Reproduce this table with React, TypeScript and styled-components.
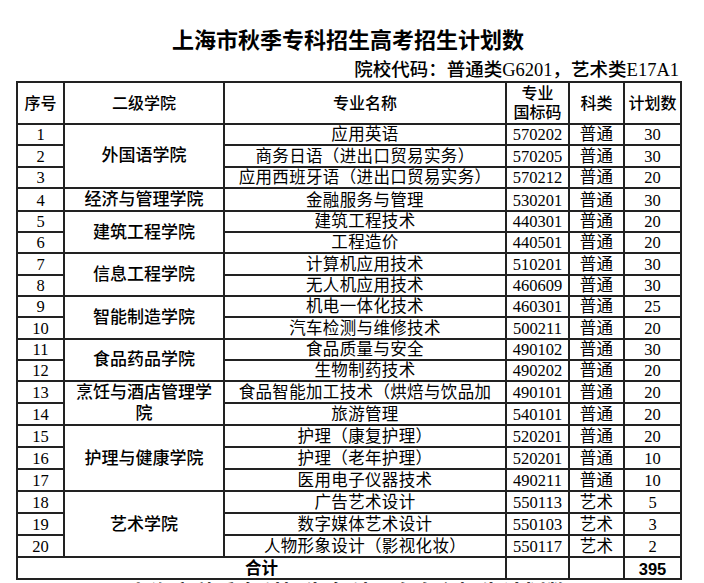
import React from "react";
import styled, { createGlobalStyle } from "styled-components";

const GlobalStyle = createGlobalStyle`
  html, body {
    margin: 0;
    padding: 0;
    background: #ffffff;
  }
  body {
    font-family: "Liberation Serif", "Noto Sans CJK SC", serif;
    color: #000;
    overflow: hidden;
  }
`;

const CJK = `"Liberation Serif", "Noto Sans CJK SC", serif`;

const Sheet = styled.div`
  width: 664px;
  padding-left: 16px;
`;

const Title = styled.div`
  padding-top: 28px;
  height: 26px;
  line-height: 26px;
  font-size: 22px;
  font-weight: 700;
  text-align: center;
  font-family: ${CJK};
`;

const SubTitle = styled.div`
  margin-top: 5px;
  height: 22px;
  line-height: 22px;
  font-size: 18.5px;
  font-weight: 500;
  text-align: right;
  padding-right: 1px;
  font-family: ${CJK};
`;

const Table = styled.table`
  width: 664px;
  border-collapse: collapse;
  table-layout: fixed;
  font-family: ${CJK};
`;

const Row = styled.tr<{ $h: number }>`
  height: ${(p) => p.$h}px;
`;

const Cell = styled.td<{ $spaced?: boolean }>`
  border: 2px solid #222;
  padding: 0;
  font-size: 16.5px;
  line-height: 18px;
  text-align: center;
  vertical-align: bottom;
  letter-spacing: ${(p) => (p.$spaced ? "0.35px" : "0")};
  white-space: nowrap;
  overflow: hidden;
`;

const HeadCell = styled.th`
  border: 2px solid #222;
  padding: 0;
  font-size: 16px;
  line-height: 19px;
  font-weight: 500;
  text-align: center;
  vertical-align: middle;
`;

const CollegeCell = styled.td`
  border: 2px solid #222;
  padding: 0 4px;
  font-size: 17px;
  line-height: 21px;
  font-weight: 500;
  text-align: center;
  vertical-align: middle;
`;

const TotalCell = styled.td<{ $sans?: boolean }>`
  border: 2px solid #222;
  padding: 0;
  font-size: 16.5px;
  line-height: 18px;
  font-weight: 700;
  text-align: center;
  vertical-align: bottom;
  font-family: ${(p) => (p.$sans ? `"Liberation Sans", "Noto Sans CJK SC", sans-serif` : CJK)};
`;

const NextTitle = styled.div`
  margin-top: 1px;
  height: 26px;
  line-height: 26px;
  font-size: 22px;
  font-weight: 700;
  text-align: center;
  font-family: ${CJK};
`;

type Major = { name: string; code: string; kind: string; plan: number };

const colleges: { name: string; majors: Major[] }[] = [
  {
    name: "外国语学院",
    majors: [
      { name: "应用英语", code: "570202", kind: "普通", plan: 30 },
      { name: "商务日语（进出口贸易实务）", code: "570205", kind: "普通", plan: 30 },
      { name: "应用西班牙语（进出口贸易实务）", code: "570212", kind: "普通", plan: 20 },
    ],
  },
  { name: "经济与管理学院", majors: [{ name: "金融服务与管理", code: "530201", kind: "普通", plan: 30 }] },
  {
    name: "建筑工程学院",
    majors: [
      { name: "建筑工程技术", code: "440301", kind: "普通", plan: 20 },
      { name: "工程造价", code: "440501", kind: "普通", plan: 20 },
    ],
  },
  {
    name: "信息工程学院",
    majors: [
      { name: "计算机应用技术", code: "510201", kind: "普通", plan: 30 },
      { name: "无人机应用技术", code: "460609", kind: "普通", plan: 30 },
    ],
  },
  {
    name: "智能制造学院",
    majors: [
      { name: "机电一体化技术", code: "460301", kind: "普通", plan: 25 },
      { name: "汽车检测与维修技术", code: "500211", kind: "普通", plan: 20 },
    ],
  },
  {
    name: "食品药品学院",
    majors: [
      { name: "食品质量与安全", code: "490102", kind: "普通", plan: 30 },
      { name: "生物制药技术", code: "490202", kind: "普通", plan: 20 },
    ],
  },
  {
    name: "烹饪与酒店管理学院",
    majors: [
      { name: "食品智能加工技术（烘焙与饮品加", code: "490101", kind: "普通", plan: 20 },
      { name: "旅游管理", code: "540101", kind: "普通", plan: 20 },
    ],
  },
  {
    name: "护理与健康学院",
    majors: [
      { name: "护理（康复护理）", code: "520201", kind: "普通", plan: 20 },
      { name: "护理（老年护理）", code: "520201", kind: "普通", plan: 10 },
      { name: "医用电子仪器技术", code: "490211", kind: "普通", plan: 10 },
    ],
  },
  {
    name: "艺术学院",
    majors: [
      { name: "广告艺术设计", code: "550113", kind: "艺术", plan: 5 },
      { name: "数字媒体艺术设计", code: "550103", kind: "艺术", plan: 3 },
      { name: "人物形象设计（影视化妆）", code: "550117", kind: "艺术", plan: 2 },
    ],
  },
];

// first 14 rows are a touch shorter than the rest in the sheet
const rowHeight = (no: number) => (no <= 14 ? 21.3 : 22);

export default function App() {
  let no = 0;
  const total = colleges.reduce((s, c) => s + c.majors.reduce((a, m) => a + m.plan, 0), 0);

  return (
    <>
      <GlobalStyle />
      <Sheet>
        <Title>上海市秋季专科招生高考招生计划数</Title>
        <SubTitle>院校代码：普通类G6201，艺术类E17A1</SubTitle>
        <Table>
          <colgroup>
            <col style={{ width: 47 }} />
            <col style={{ width: 160 }} />
            <col style={{ width: 282 }} />
            <col style={{ width: 63 }} />
            <col style={{ width: 55 }} />
            <col style={{ width: 57 }} />
          </colgroup>
          <thead>
            <Row $h={42}>
              <HeadCell>序号</HeadCell>
              <HeadCell>二级学院</HeadCell>
              <HeadCell>专业名称</HeadCell>
              <HeadCell>
                专业
                <br />
                国标码
              </HeadCell>
              <HeadCell>科类</HeadCell>
              <HeadCell>计划数</HeadCell>
            </Row>
          </thead>
          <tbody>
            {colleges.map((college) =>
              college.majors.map((m, i) => {
                no += 1;
                return (
                  <Row key={no} $h={rowHeight(no)}>
                    <Cell>{no}</Cell>
                    {i === 0 && <CollegeCell rowSpan={college.majors.length}>{college.name}</CollegeCell>}
                    <Cell $spaced>{m.name}</Cell>
                    <Cell>{m.code}</Cell>
                    <Cell $spaced>{m.kind}</Cell>
                    <Cell>{m.plan}</Cell>
                  </Row>
                );
              })
            )}
            <Row $h={22}>
              <TotalCell colSpan={3}>合计</TotalCell>
              <TotalCell />
              <TotalCell />
              <TotalCell $sans>{total}</TotalCell>
            </Row>
          </tbody>
        </Table>
        <NextTitle>上海市秋季专科招生专科层次自主招生计划数</NextTitle>
      </Sheet>
    </>
  );
}
